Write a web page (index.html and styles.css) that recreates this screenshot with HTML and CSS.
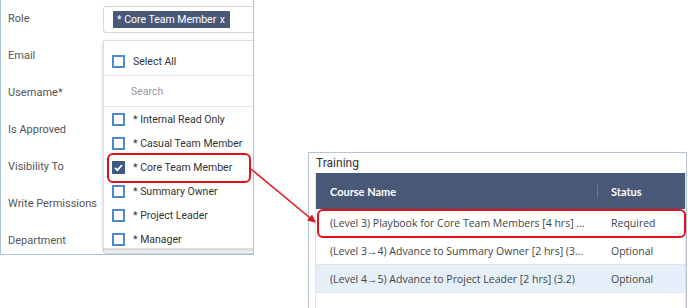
FILE: index.html
```html
<!DOCTYPE html>
<html>
<head>
<meta charset="utf-8">
<link rel="stylesheet" href="styles.css">
</head>
<body>
<div class="page">
  <div class="form-panel">
    <div class="field"><span class="label">Role</span><div class="input role-input"><span class="tag">* Core Team Member <span class="tag-x">x</span></span></div></div>
    <div class="field"><span class="label">Email</span><div class="input"></div></div>
    <div class="field"><span class="label">Username*</span><div class="input"></div></div>
    <div class="field"><span class="label">Is Approved</span><div class="input"></div></div>
    <div class="field"><span class="label">Visibility To</span><div class="input"></div></div>
    <div class="field"><span class="label">Write Permissions</span><div class="input"></div></div>
    <div class="field"><span class="label">Department</span><div class="input"></div></div>

    <div class="dropdown">
      <div class="dd-all"><span class="cb"></span><span>Select All</span></div>
      <div class="dd-search">Search</div>
      <div class="dd-item"><span class="cb"></span><span>* Internal Read Only</span></div>
      <div class="dd-item"><span class="cb"></span><span>* Casual Team Member</span></div>
      <div class="dd-item"><span class="cb checked"><svg viewBox="0 0 13 13" width="13" height="13"><path d="M3 6.8 L5.4 9.2 L10 4" fill="none" stroke="#fff" stroke-width="1.8"/></svg></span><span>* Core Team Member</span></div>
      <div class="dd-item"><span class="cb"></span><span>* Summary Owner</span></div>
      <div class="dd-item"><span class="cb"></span><span>* Project Leader</span></div>
      <div class="dd-item"><span class="cb"></span><span>* Manager</span></div>
    </div>
  </div>

  <div class="training-panel">
    <div class="training-title">Training</div>
    <div class="grid">
      <div class="grid-head">
        <div class="col-name">Course Name</div>
        <div class="col-status">Status</div>
      </div>
      <div class="grid-row">
        <div class="col-name">(Level 3) Playbook for Core Team Members [4 hrs] ...</div>
        <div class="col-status">Required</div>
      </div>
      <div class="grid-row">
        <div class="col-name">(Level 3→4) Advance to Summary Owner [2 hrs] (3...</div>
        <div class="col-status">Optional</div>
      </div>
      <div class="grid-row alt">
        <div class="col-name">(Level 4→5) Advance to Project Leader [2 hrs] (3.2)</div>
        <div class="col-status">Optional</div>
      </div>
    </div>
  </div>

  <svg class="annotations" width="688" height="308" viewBox="0 0 688 308">
    <defs>
      <marker id="ah" markerWidth="8" markerHeight="8" refX="7" refY="4" orient="auto" markerUnits="userSpaceOnUse">
        <path d="M0 0 L8 4 L0 8 Z" fill="#e3111b"/>
      </marker>
    </defs>
    <rect x="108" y="154" width="142" height="28" rx="5" ry="5" fill="none" stroke="#e3111b" stroke-width="2"/>
    <rect x="318" y="210" width="367" height="27" rx="5" ry="5" fill="none" stroke="#e3111b" stroke-width="2"/>
    <line x1="251" y1="169" x2="315" y2="222" stroke="#e3111b" stroke-width="1.5" marker-end="url(#ah)"/>
  </svg>
</div>
</body>
</html>
```

FILE: styles.css
```css
* { box-sizing: border-box; }
html, body { margin: 0; padding: 0; background: #fff; }
body { width: 688px; height: 308px; overflow: hidden; }

.page {
  position: relative;
  width: 688px;
  height: 308px;
  display: flex;
  align-items: flex-start;
}

/* ---------- left form ---------- */
.form-panel {
  position: relative;
  width: 254px;
  height: 255px;
  border: 1px solid #a9c1e2;
  border-top: none;
  overflow: hidden;
  padding-left: 7px;
  font-family: Roboto, "Liberation Sans", sans-serif;
  font-size: 11px;
  color: #555;
}
.field {
  display: flex;
  align-items: center;
  height: 37px;
}
.label { width: 95px; flex: none; white-space: nowrap; }
.input {
  flex: none;
  width: 170px;
  height: 27px;
  border: 1px solid #d6d6d6;
  border-radius: 3px;
  display: flex;
  align-items: center;
  padding-left: 9px;
}
.role-input { margin-top: 1px; }
.tag {
  background: #4a5878;
  color: #fff;
  font-size: 10.5px;
  padding: 0 5px 0 4px;
  height: 17px;
  line-height: 17px;
  border-radius: 1px;
  white-space: nowrap;
}
.tag-x { margin-left: 1px; }

.dropdown {
  position: absolute;
  left: 102px;
  top: 40px;
  width: 172px;
  height: 209px;
  background: #fff;
  border: 1px solid #dcdcdc;
  box-shadow: 0 2px 4px rgba(0,0,0,0.18);
  color: #333;
  font-size: 10.5px;
}
.dd-all {
  height: 35px;
  padding-top: 6px;
  display: flex;
  align-items: center;
  border-bottom: 1px solid #e6e6e6;
  padding-left: 8px;
  gap: 8px;
}
.dd-search {
  height: 31px;
  display: flex;
  align-items: center;
  padding-left: 27px;
  color: #999;
  border-bottom: 1px solid #e6e6e6;
}
.dd-item {
  height: 24px;
  display: flex;
  align-items: center;
  padding-left: 8px;
  gap: 8px;
  white-space: nowrap;
}
.cb {
  flex: none;
  width: 13px;
  height: 13px;
  border: 2px solid #4d8bcb;
  background: #fff;
  display: flex;
  align-items: center;
  justify-content: center;
}
.cb.checked {
  background: #3f5a80;
  border-color: #3f5a80;
}
.cb.checked svg { flex: none; }

/* ---------- right training grid ---------- */
.training-panel {
  margin-left: 54px;
  margin-top: 152px;
  width: 379px;
  height: 156px;
  border: 1px solid #b9c4d3;
  border-bottom: none;
  padding-left: 6px;
  font-family: "Open Sans", "Liberation Sans", sans-serif;
  font-size: 10.5px;
  color: #444;
}
.training-title {
  height: 20px;
  line-height: 20px;
  padding-left: 1px;
  font-family: Roboto, "Liberation Sans", sans-serif;
  font-size: 12px;
  color: #333;
}
.grid {
  height: 135px;
  border-left: 1px solid #e2e2e2;
  border-right: 1px solid #e2e2e2;
}
.grid-head {
  display: flex;
  align-items: center;
  height: 36px;
  background: #4a5878;
  color: #fff;
  font-family: Lato, "Liberation Sans", sans-serif;
  font-weight: bold;
  font-size: 11px;
}
.grid-head .col-name { border-right: 1px solid #6a7895; line-height: 13px; }
.grid-row {
  display: flex;
  align-items: center;
  height: 28px;
  border-bottom: 1px solid #e3e3e3;
}
.grid-row.alt { background: #e5f0fb; }
.col-name {
  width: 282px;
  padding-left: 14px;
  white-space: nowrap;
  overflow: hidden;
}
.col-status { padding-left: 13px; }

.annotations {
  position: absolute;
  left: 0;
  top: 0;
  pointer-events: none;
}
```
